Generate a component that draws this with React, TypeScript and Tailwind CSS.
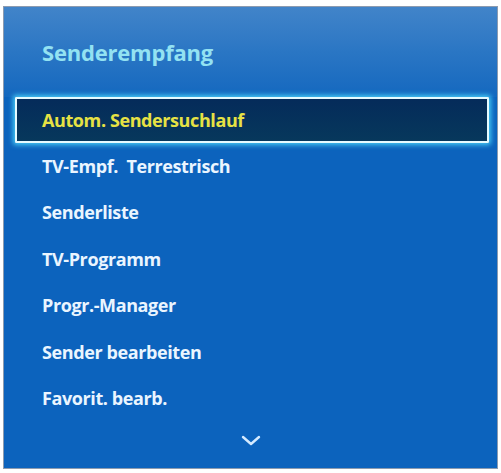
const items = [
    'TV-Empf.  Terrestrisch',
    'Senderliste',
    'TV-Programm',
    'Progr.-Manager',
    'Sender bearbeiten',
    'Favorit. bearb.',
];

export default function App() {
    return (
        <div className="w-[501px] h-[473px] bg-white pt-[6px] pl-[3px]">
            {/* Menu panel */}
            <div
                className="relative w-[495px] h-[463px] border border-[#8c9bb0] bg-[#0c63bd] flex flex-col"
                style={{ fontFamily: '"Open Sans", "Noto Sans", sans-serif' }}
            >
                {/* Header */}
                <div className="h-[90px] bg-gradient-to-b from-[#4184c9] via-[#2a76c4] to-[#1368bf] pl-[38px] pt-[30px]">
                    <h1 className="text-[22px] font-bold leading-[30px] tracking-[-0.2px] text-[#93e2f2]">
                        Senderempfang
                    </h1>
                </div>

                {/* Selected item */}
                <div className="ml-[11px] mr-[8px] h-[46px] rounded-[1px] border-2 border-[#e6fbff] bg-gradient-to-b from-[#052b5a] to-[#07385c] shadow-[0_0_5px_2px_rgba(80,220,255,0.85)] flex items-center pl-[25px]">
                    <span className="text-[18px] font-bold tracking-[-0.4px] text-[#e6e244]">
                        Autom. Sendersuchlauf
                    </span>
                </div>

                {/* Other items */}
                <div className="flex flex-col">
                    {items.map((label) => (
                        <div key={label} className="h-[46.5px] flex items-center pl-[38px]">
                            <span className="text-[18px] font-bold tracking-[-0.4px] text-[#eaf5ff] whitespace-pre">
                                {label}
                            </span>
                        </div>
                    ))}
                </div>

                {/* Scroll indicator */}
                <div className="flex justify-center pt-[13px]">
                    <svg width="20" height="11" viewBox="0 0 20 11" fill="none">
                        <path d="M2 2 L10 9 L18 2" stroke="#d4eaff" strokeWidth="2.4" strokeLinecap="round" strokeLinejoin="round" />
                    </svg>
                </div>
            </div>
        </div>
    );
}
